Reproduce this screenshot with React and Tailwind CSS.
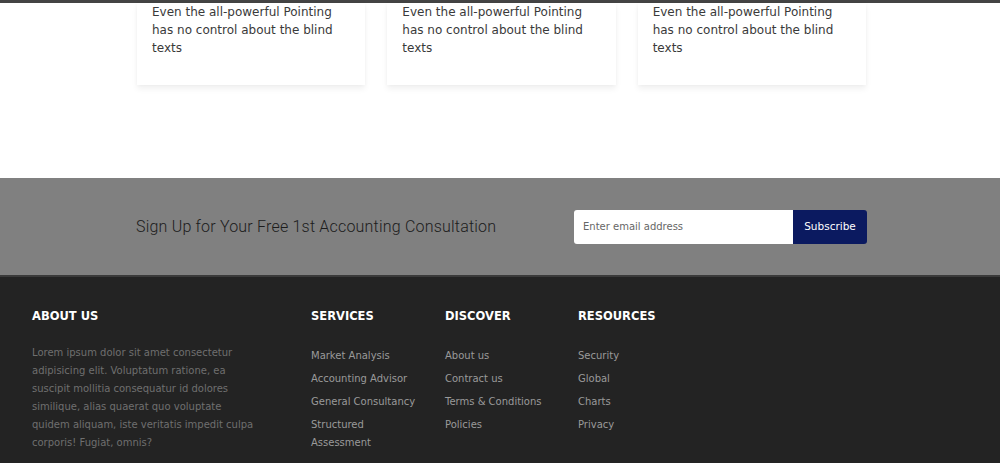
import React from "react";

const cards = [1, 2, 3];

const services = ["Market Analysis", "Accounting Advisor", "General Consultancy", "Structured Assessment"];
const discover = ["About us", "Contract us", "Terms & Conditions", "Policies"];
const resources = ["Security", "Global", "Charts", "Privacy"];

const FooterLinks = ({ title, items, width }) => (
  <div className={width}>
    <h4 className="text-[11.5px] font-bold text-white leading-[20px]">{title}</h4>
    <ul className="mt-[21px] flex flex-col gap-[5px]">
      {items.map((item) => (
        <li key={item} className="text-[10px] leading-[18px] text-[#9a9a9a]">
          {item}
        </li>
      ))}
    </ul>
  </div>
);

export default function App() {
  return (
    <div className="w-[1000px] h-[463px] overflow-hidden bg-white font-['DejaVu_Sans',sans-serif]">
      <div className="h-[3px] bg-[#444]" />

      {/* cards, scrolled so only the bottom shows */}
      <section className="h-[175px]">
        <div className="ml-[137px] w-[729px] grid grid-cols-3 gap-[22px]">
          {cards.map((c) => (
            <div
              key={c}
              className="h-[82px] bg-white px-[15px] shadow-[0_4px_6px_rgba(0,0,0,0.06),0_0_4px_rgba(0,0,0,0.03)]"
            >
              <p className="text-[12px] leading-[18px] text-[#3a3a3a]">
                Even the all-powerful Pointing has no control about the blind texts
              </p>
            </div>
          ))}
        </div>
      </section>

      {/* newsletter band */}
      <section className="h-[97px] bg-[#808080] flex items-center">
        <div className="ml-[136px] w-[731px] flex items-center justify-between">
          <h3 className="text-[16px] text-[#1c1c1c] font-['Roboto',sans-serif] font-light tracking-[0.2px]">
            Sign Up for Your Free 1st Accounting Consultation
          </h3>
          <form className="flex h-[34px]" onSubmit={(e) => e.preventDefault()}>
            <input
              type="email"
              placeholder="Enter email address"
              className="w-[219px] h-full bg-white rounded-l-[3px] px-[9px] text-[10px] text-[#333] placeholder:text-[#666] outline-none"
            />
            <button
              type="submit"
              className="w-[74px] h-full bg-[#0b1a60] text-white text-[10.5px] rounded-r-[3px]"
            >
              Subscribe
            </button>
          </form>
        </div>
      </section>

      {/* footer */}
      <footer className="bg-[#232323] h-[188px] border-t-[2px] border-[#3a3a3a]">
        <div className="pl-[32px] pt-[29px] flex">
          <div className="w-[279px]">
            <h4 className="text-[11.5px] font-bold text-white leading-[20px]">ABOUT US</h4>
            <p className="mt-[18px] w-[230px] text-[10px] leading-[18px] text-[#6f6f6f]">
              Lorem ipsum dolor sit amet consectetur adipisicing elit. Voluptatum ratione, ea suscipit mollitia
              consequatur id dolores similique, alias quaerat quo voluptate quidem aliquam, iste veritatis impedit
              culpa corporis! Fugiat, omnis?
            </p>
          </div>
          <FooterLinks title="SERVICES" items={services} width="w-[134px] pr-[20px]" />
          <FooterLinks title="DISCOVER" items={discover} width="w-[133px]" />
          <FooterLinks title="RESOURCES" items={resources} width="w-[133px]" />
        </div>
      </footer>
    </div>
  );
}
